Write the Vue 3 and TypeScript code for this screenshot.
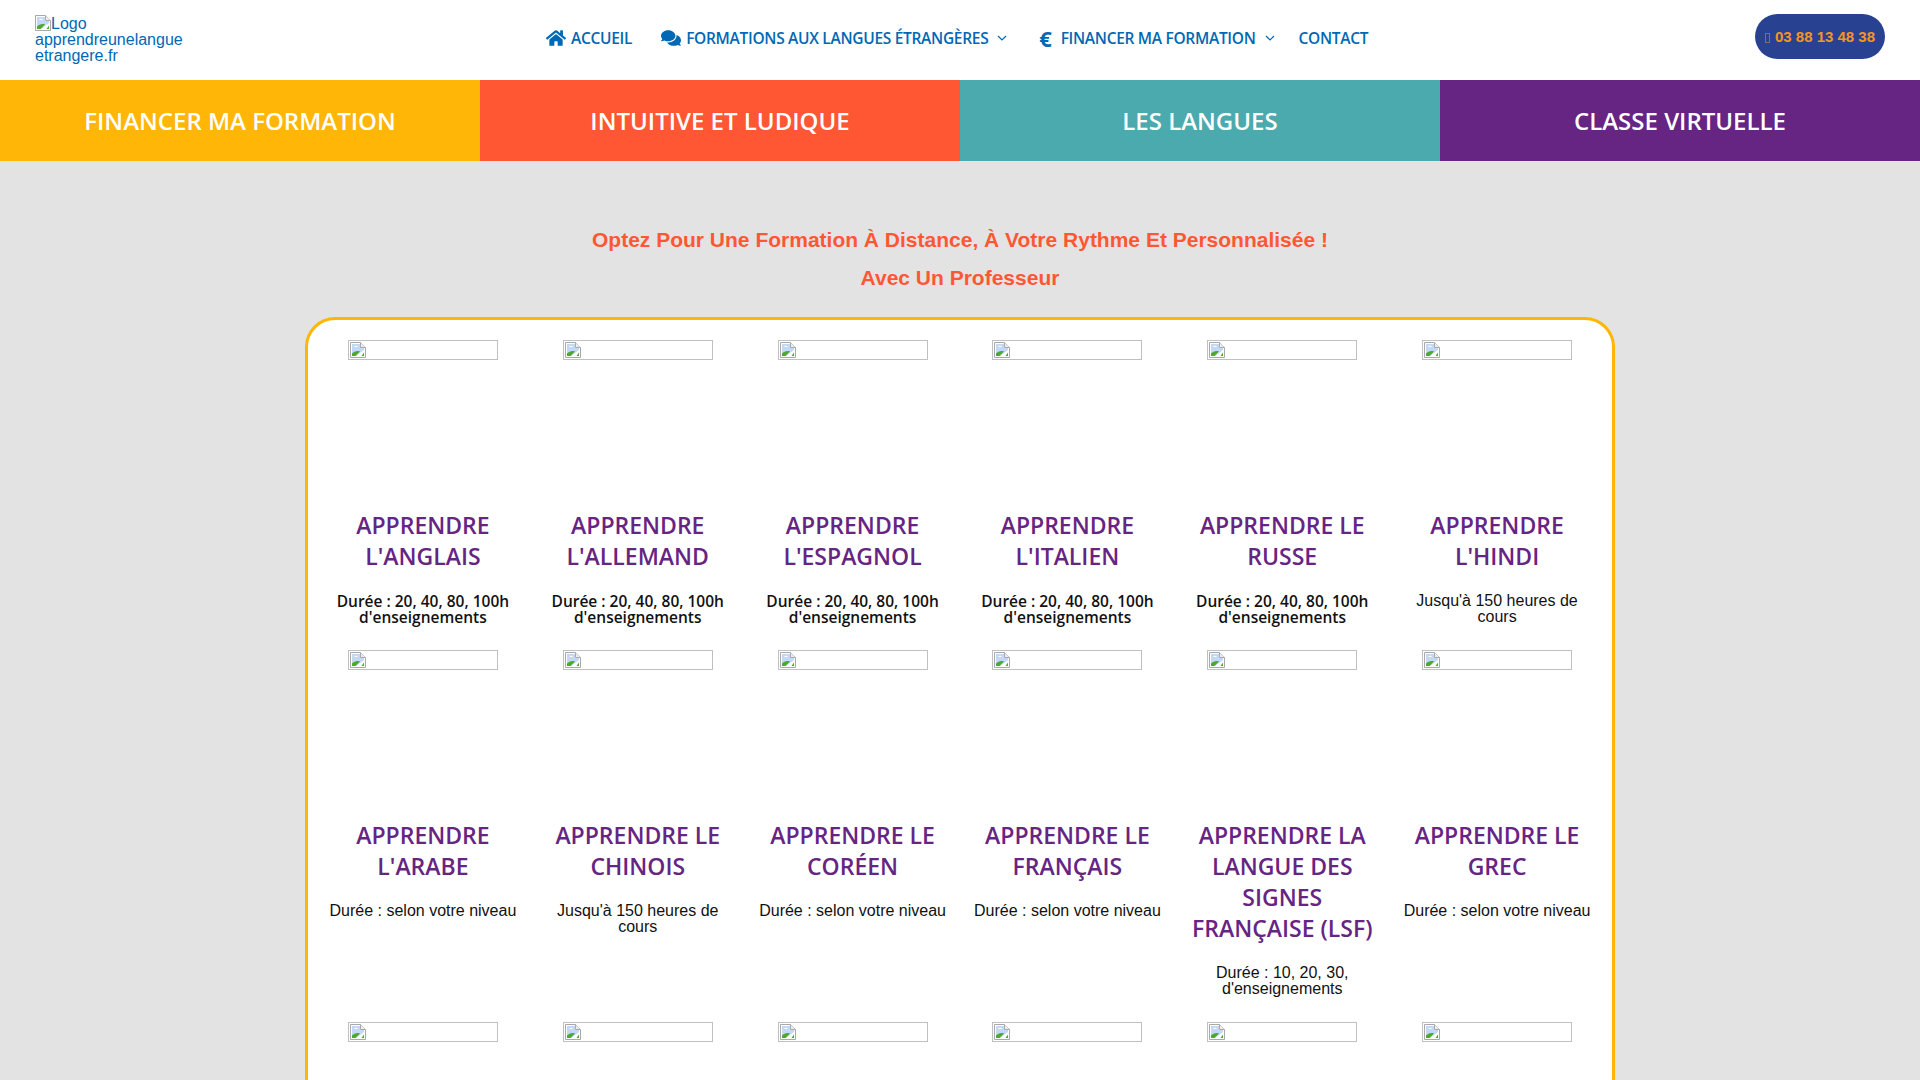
<script setup lang="ts">
interface Course {
  title: string;
  info: string;
  strong: boolean;
}

const bars = [
  { label: 'Financer ma formation', color: '#ffb606' },
  { label: 'Intuitive et ludique', color: '#ff5733' },
  { label: 'Les langues', color: '#4baaad' },
  { label: 'Classe virtuelle', color: '#662483' },
];

const hours = 'Durée : 20, 40, 80, 100h d\'enseignements';
const level = 'Durée : selon votre niveau';
const cap = 'Jusqu\'à 150 heures de cours';

const courses: Course[] = [
  { title: 'Apprendre l\'anglais', info: hours, strong: true },
  { title: 'Apprendre l\'allemand', info: hours, strong: true },
  { title: 'Apprendre l\'espagnol', info: hours, strong: true },
  { title: 'Apprendre l\'italien', info: hours, strong: true },
  { title: 'Apprendre le russe', info: hours, strong: true },
  { title: 'Apprendre l\'hindi', info: cap, strong: false },
  { title: 'Apprendre l\'arabe', info: level, strong: false },
  { title: 'Apprendre le chinois', info: cap, strong: false },
  { title: 'Apprendre le coréen', info: level, strong: false },
  { title: 'Apprendre le français', info: level, strong: false },
  { title: 'Apprendre la langue des signes française (LSF)', info: 'Durée : 10, 20, 30, d\'enseignements', strong: false },
  { title: 'Apprendre le grec', info: level, strong: false },
];

// la troisième rangée est coupée par le bas de l'écran
const nextRow = [1, 2, 3, 4, 5, 6];
</script>

<template>
  <div class="page">
    <header class="topbar">
      <a class="logo" href="#">
        <svg class="broken broken-logo" viewBox="0 0 16 16">
          <path d="M0.5 0.5H10.5L15.5 5.5V15.5H0.5Z" fill="#fff" stroke="#a9a9a9" />
          <path d="M2 2H10V6H14V8L6 14H2Z" fill="#c3d7f7" />
          <path d="M4 5C5 3.4 7 3.4 8 5Z" fill="#fff" />
          <path d="M2 14V11.5C4 9.5 7 8.5 10 9.5L5.5 14Z" fill="#4ea82f" />
          <path d="M11.5 14H14V10.5Z" fill="#4ea82f" />
          <path d="M10.5 0.5V5.5H15.5" fill="#eee" stroke="#a9a9a9" />
        </svg>Logo apprendreunelangue etrangere.fr
      </a>

      <nav class="menu">
        <a class="link link-home" href="#">
          <svg class="ico-home" viewBox="0 0 576 512">
            <path d="M280.37 148.26L96 300.11V464a16 16 0 0 0 16 16l112.06-.29a16 16 0 0 0 15.92-16V368a16 16 0 0 1 16-16h64a16 16 0 0 1 16 16v95.64a16 16 0 0 0 16 16.05L464 480a16 16 0 0 0 16-16V300L295.67 148.26a12.19 12.19 0 0 0-15.3 0zM571.6 251.47L488 182.56V44.05a12 12 0 0 0-12-12h-56a12 12 0 0 0-12 12v72.61L318.47 43a48 48 0 0 0-61 0L4.34 251.47a12 12 0 0 0-1.6 16.9l25.5 31A12 12 0 0 0 45.15 301l235.22-193.74a12.19 12.19 0 0 1 15.3 0L530.9 301a12 12 0 0 0 16.9-1.6l25.5-31a12 12 0 0 0-1.7-16.93z" />
          </svg>
          Accueil
        </a>
        <a class="link link-formations" href="#">
          <svg class="ico-comments" viewBox="0 0 576 512">
            <path d="M416 192c0-88.4-93.1-160-208-160S0 103.6 0 192c0 34.3 14.1 65.9 38 92-13.4 30.2-35.5 54.2-35.8 54.5-2.2 2.3-2.8 5.7-1.5 8.7S4.8 352 8 352c36.6 0 66.9-12.3 88.7-25 32.2 15.7 70.3 25 111.3 25 114.9 0 208-71.6 208-160zm122 220c23.9-26 38-57.7 38-92 0-66.9-53.5-124.2-129.3-148.1.9 6.6 1.3 13.3 1.3 20.1 0 105.9-107.7 192-240 192-10.8 0-21.3-.8-31.7-1.9C207.8 439.6 281.8 480 368 480c41 0 79.1-9.2 111.3-25 21.8 12.7 52.1 25 88.7 25 3.2 0 6.1-1.9 7.3-4.8 1.3-2.9.7-6.3-1.5-8.7-.3-.3-22.4-24.2-35.8-54.5z" />
          </svg>
          Formations aux langues étrangères
          <svg class="chevron" viewBox="0 0 10 6"><path d="M1 1L5 5L9 1" /></svg>
        </a>
        <a class="link link-funding" href="#">
          <span class="euro">€</span>
          Financer ma formation
          <svg class="chevron" viewBox="0 0 10 6"><path d="M1 1L5 5L9 1" /></svg>
        </a>
        <a class="link link-contact" href="#">Contact</a>
      </nav>

      <a class="phone" href="#"><span class="tofu"></span>03 88 13 48 38</a>
    </header>

    <section class="bars">
      <a v-for="bar in bars" :key="bar.label" class="bar" :style="{ backgroundColor: bar.color }" href="#">
        {{ bar.label }}
      </a>
    </section>

    <main class="content">
      <h2 class="lead">
        Optez Pour Une Formation À Distance, À Votre Rythme Et Personnalisée !<br />
        Avec Un Professeur
      </h2>

      <div class="panel">
        <article v-for="course in courses" :key="course.title" class="course">
          <div class="thumb">
            <span class="placeholder">
              <svg class="broken" viewBox="0 0 16 16">
                <path d="M0.5 0.5H10.5L15.5 5.5V15.5H0.5Z" fill="#fff" stroke="#a9a9a9" />
                <path d="M2 2H10V6H14V8L6 14H2Z" fill="#c3d7f7" />
                <path d="M4 5C5 3.4 7 3.4 8 5Z" fill="#fff" />
                <path d="M2 14V11.5C4 9.5 7 8.5 10 9.5L5.5 14Z" fill="#4ea82f" />
                <path d="M11.5 14H14V10.5Z" fill="#4ea82f" />
                <path d="M10.5 0.5V5.5H15.5" fill="#eee" stroke="#a9a9a9" />
              </svg>
            </span>
          </div>
          <h3 class="course-title">{{ course.title }}</h3>
          <p class="course-info" :class="{ strong: course.strong }">{{ course.info }}</p>
        </article>

        <article v-for="n in nextRow" :key="n" class="course">
          <div class="thumb">
            <span class="placeholder">
              <svg class="broken" viewBox="0 0 16 16">
                <path d="M0.5 0.5H10.5L15.5 5.5V15.5H0.5Z" fill="#fff" stroke="#a9a9a9" />
                <path d="M2 2H10V6H14V8L6 14H2Z" fill="#c3d7f7" />
                <path d="M4 5C5 3.4 7 3.4 8 5Z" fill="#fff" />
                <path d="M2 14V11.5C4 9.5 7 8.5 10 9.5L5.5 14Z" fill="#4ea82f" />
                <path d="M11.5 14H14V10.5Z" fill="#4ea82f" />
                <path d="M10.5 0.5V5.5H15.5" fill="#eee" stroke="#a9a9a9" />
              </svg>
            </span>
          </div>
        </article>
      </div>
    </main>
  </div>
</template>

<style scoped>
a {
  text-decoration: none;
}

.page {
  height: 1080px;
  overflow: hidden;
  background: #e3e3e3;
  font-family: "Liberation Sans", Arial, sans-serif;
}

.topbar {
  display: flex;
  align-items: flex-start;
  height: 80px;
  background: #fff;
}

.logo {
  display: block;
  width: 150px;
  margin: 15px 0 0 35px;
  font-size: 16px;
  line-height: 16px;
  color: #0068b4;
}

.broken {
  display: block;
  width: 16px;
  height: 16px;
}

.broken-logo {
  display: inline-block;
  vertical-align: -2px;
}

.menu {
  display: flex;
  align-items: center;
  height: 76px;
  margin-left: 361px;
}

.link {
  display: flex;
  align-items: center;
  font-family: "Open Sans", sans-serif;
  font-size: 15.5px;
  font-weight: 650;
  letter-spacing: -0.3px;
  text-transform: uppercase;
  white-space: nowrap;
  color: #0068b4;
}

.ico-home {
  width: 20px;
  height: 18px;
  margin-right: 5px;
  fill: #0068b4;
}

.ico-comments {
  width: 20px;
  height: 18px;
  margin-right: 5px;
  fill: #0068b4;
}

.euro {
  margin-right: 9px;
  font-size: 22px;
  font-weight: 700;
  line-height: 18px;
}

.chevron {
  width: 10px;
  height: 6px;
  margin-left: 9px;
  fill: none;
  stroke: #0068b4;
  stroke-width: 1.2;
}

.link-home {
  margin-right: 29px;
}

.link-formations {
  margin-right: 32px;
}

.link-funding {
  margin-right: 24px;
}

.phone {
  margin: 14px 35px 0 auto;
  width: 130px;
  height: 45px;
  border-radius: 23px;
  background: #284190;
  color: #f7941d;
  font-size: 15px;
  font-weight: 700;
  line-height: 45px;
  text-align: center;
  white-space: nowrap;
}

.tofu {
  display: inline-block;
  box-sizing: border-box;
  width: 5px;
  height: 10px;
  margin-right: 5px;
  border: 1px solid rgba(247, 148, 29, 0.5);
  vertical-align: -1px;
}

.bars {
  display: grid;
  grid-template-columns: repeat(4, 1fr);
}

.bar {
  height: 81px;
  font-family: "Open Sans", sans-serif;
  font-size: 24px;
  font-weight: 600;
  line-height: 81px;
  text-align: center;
  text-transform: uppercase;
  color: #fff;
}

.content {
  padding-top: 60px;
}

.lead {
  margin: 0 0 20px;
  font-size: 21px;
  font-weight: 700;
  line-height: 38px;
  text-align: center;
  color: #ff5733;
}

.panel {
  display: grid;
  grid-template-columns: repeat(6, 1fr);
  width: 1289px;
  margin: 0 auto;
  padding: 20px 7.5px 0;
  border: 3px solid #ffb606;
  border-radius: 30px;
  background: #fff;
}

.course {
  padding-bottom: 25px;
  text-align: center;
}

.thumb {
  height: 150px;
  margin-bottom: 20px;
}

.placeholder {
  display: block;
  box-sizing: border-box;
  width: 150px;
  height: 20px;
  margin: 0 auto;
  padding: 1px;
  border: 1px solid #c0c0c0;
}

.course-title {
  margin: 0;
  padding: 0 10px;
  font-family: "Open Sans", sans-serif;
  font-size: 23px;
  font-weight: 600;
  line-height: 31px;
  text-transform: uppercase;
  color: #662483;
}

.course-info {
  margin: 21px 0 0;
  padding: 0 10px;
  font-size: 16px;
  line-height: 16px;
  color: #111;
}

.course-info.strong {
  font-family: "Open Sans", sans-serif;
  font-size: 15.5px;
  font-weight: 600;
}
</style>

<style>
body {
  margin: 0;
  overflow: hidden;
}
</style>
